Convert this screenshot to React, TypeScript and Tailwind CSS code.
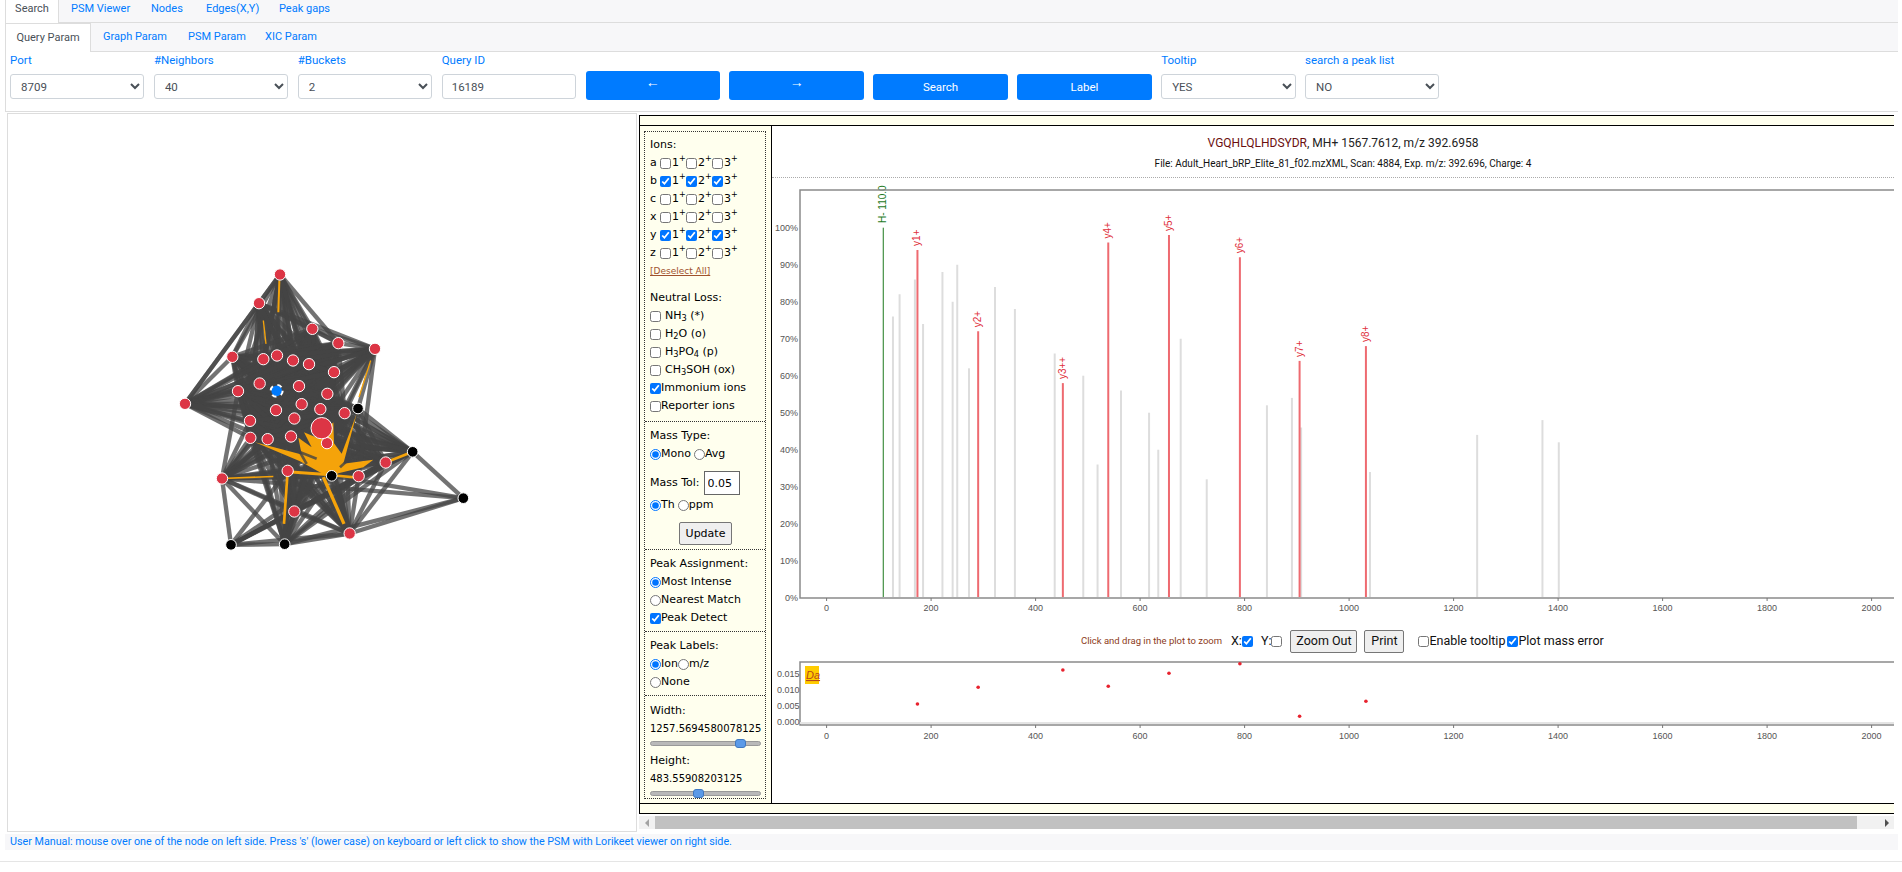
import { ReactNode } from "react";

type Pt = [number, number];

// graph nodes, in 3x coordinates of the graph area
const upper: Pt[] = [
	[360, 72], [297, 158], [457, 235], [535, 278], [645, 295], [217, 319], [310, 326], [351, 315],
	[399, 330], [447, 341], [522, 365], [299, 399], [234, 422], [417, 407], [502, 430], [348, 479],
	[425, 461], [481, 476], [554, 488], [270, 511], [403, 504], [271, 562], [323, 566], [393, 558],
	[501, 578], [75, 460], [485, 533],
];
const lowerRed: Pt[] = [[186, 684], [383, 661], [403, 783], [569, 849], [596, 677], [677, 636]];
const lowerBlack: Pt[] = [[594, 474], [758, 604], [515, 676], [910, 743], [213, 883], [374, 881]];

function buildEdges() {
	const edges: [Pt, Pt][] = [];
	const same = (a: Pt, x: number, y: number) => a[0] === x && a[1] === y;
	upper.forEach((a, i) =>
		upper.slice(i + 1).forEach((b) => {
			if (same(a, 360, 72) && same(b, 645, 295)) return;
			edges.push([a, b]);
		}),
	);
	const lower = [...lowerRed, ...lowerBlack];
	const far: Pt = [910, 743];
	const top: Pt = [594, 474];
	lower.forEach((a, i) =>
		lower.slice(i + 1).forEach((b) => {
			if (same(a, far[0], far[1]) || same(b, far[0], far[1])) {
				const o = same(a, far[0], far[1]) ? b : a;
				if (![758, 569, 186, 515, 374].includes(o[0])) return;
			}
			if (same(a, top[0], top[1]) || same(b, top[0], top[1])) {
				const o = same(a, top[0], top[1]) ? b : a;
				if (![758, 677, 515, 596].includes(o[0])) return;
			}
			edges.push([a, b]);
		}),
	);
	upper
		.filter((a) => a[1] >= 400 && a[0] !== 75)
		.forEach((a) =>
			lower.forEach((b) => {
				if (b[0] === 213 || b[0] === 910) return;
				edges.push([a, b]);
			}),
		);
	edges.push([[645, 295], [594, 474]]);
	edges.push([[645, 295], [596, 677]]);
	return edges;
}

function Graph() {
	return (
		<svg viewBox="-456 -408 1884 2148" className="w-full h-full block">
			<g stroke="#444444" strokeOpacity="0.75" strokeWidth="13">
				{buildEdges().map(([a, b], i) => (
					<line key={i} x1={a[0]} y1={a[1]} x2={b[0]} y2={b[1]} />
				))}
			</g>
			{/* orange highlighted edges */}
			<path
				d="M285,575 L425,612 L415,562 L455,590 L432,545 L478,565 L520,515 L522,578 L545,610 L590,490 L550,640 L640,628 L610,650 L535,668 L515,685 L470,660 L420,632 Z"
				fill="#f5a30a"
			/>
			<g stroke="#f5a30a" fill="none">
				<line x1="490" y1="680" x2="552" y2="820" strokeWidth="10" />
				<line x1="383" y1="661" x2="372" y2="820" strokeWidth="8" />
				<line x1="186" y1="684" x2="340" y2="678" strokeWidth="5" />
				<line x1="383" y1="664" x2="500" y2="672" strokeWidth="9" />
				<line x1="677" y1="636" x2="758" y2="604" strokeWidth="8" />
				<line x1="525" y1="675" x2="600" y2="682" strokeWidth="8" />
				<line x1="358" y1="90" x2="355" y2="185" strokeWidth="6" />
				<line x1="310" y1="210" x2="318" y2="280" strokeWidth="4" />
				<line x1="632" y1="330" x2="597" y2="440" strokeWidth="4" />
			</g>
			{/* a few dark edges run over the orange */}
			<g stroke="#444444" strokeOpacity="0.8" strokeWidth="8">
				<line x1="323" y1="566" x2="470" y2="625" />
				<line x1="393" y1="558" x2="440" y2="640" />
				<line x1="596" y1="600" x2="540" y2="650" />
			</g>
			{[...upper, ...lowerRed].map((n, i) => (
				<circle
					key={i}
					cx={n[0]}
					cy={n[1]}
					r={n[0] === 485 ? 32 : 17}
					fill="#dc3545"
					stroke="#ffffff"
					strokeWidth="3"
				/>
			))}
			{lowerBlack.map((n, i) => (
				<circle key={i} cx={n[0]} cy={n[1]} r="16" fill="#000000" stroke="#ffffff" strokeWidth="3" />
			))}
			<circle cx="350" cy="421" r="16" fill="#007bff" />
			<circle cx="350" cy="421" r="18" fill="none" stroke="#ffffff" strokeWidth="6" strokeDasharray="14 14.3" />
		</svg>
	);
}

const px = (z: number) => 770 + z / 1.96;
const py = (p: number) => 597.7 - 3.7 * p;

const grey: Pt[] = [
	[241, 76], [254, 82], [284, 86], [300, 74], [338, 88], [358, 80], [367, 90], [390, 62], [441, 84],
	[480, 78], [558, 66], [614, 60], [642, 36], [688, 56], [743, 50], [761, 40], [805, 70], [856, 32],
	[974, 52], [1023, 54], [1041, 46], [1176, 34], [1386, 44], [1514, 48], [1546, 42],
];
const red: [number, number, string][] = [
	[289, 94, "y1+"], [408, 72, "y2+"], [574, 58, "y3++"], [663, 96, "y4+"],
	[782, 98, "y5+"], [921, 92, "y6+"], [1038, 64, "y7+"], [1168, 68, "y8+"],
];
const errPts: Pt[] = [
	[289, 704], [408, 687.3], [574, 670], [663, 686.3], [782, 673.3], [921, 663.7], [1038, 716.3], [1168, 701.3],
];
const ticks = [0, 200, 400, 600, 800, 1000, 1200, 1400, 1600, 1800, 2000];
const tx = (m: number) => 826.6 + 0.5225 * m;

function Spectrum() {
	return (
		<svg viewBox="772 178 1122 447" className="block w-[1122px] h-[447px] shrink-0 font-['Liberation_Sans',sans-serif]">
			{grey.map(([z, p], i) => (
				<line key={i} x1={px(z)} x2={px(z)} y1={py(p)} y2={597} stroke="#dddddd" strokeWidth="2" />
			))}
			{red.map(([z, p, label]) => (
				<g key={label}>
					<line x1={px(z)} x2={px(z)} y1={py(p)} y2={597} stroke="#ee6a70" strokeWidth="2" />
					<text
						x={px(z) + 3}
						y={py(p) - 4}
						fontSize="10"
						fill="#e0303c"
						transform={`rotate(-90 ${px(z) + 3} ${py(p) - 4})`}
					>
						{label}
					</text>
				</g>
			))}
			<line x1={px(222)} x2={px(222)} y1={py(100)} y2={597} stroke="#1d7a1d" strokeWidth="1" />
			<text
				x={px(222) + 3}
				y={223}
				fontSize="10"
				fill="#1d7a1d"
				transform={`rotate(-90 ${px(222) + 3} 223)`}
			>
				H- 110.0
			</text>
			<polyline points="1894,190 800,190 800,598 1894,598" fill="none" stroke="#8a8a8a" strokeWidth="1.5" />
			{[0, 10, 20, 30, 40, 50, 60, 70, 80, 90, 100].map((p) => (
				<text key={p} x="798" y={py(p) + 3} fontSize="9" fill="#555555" textAnchor="end">
					{p}%
				</text>
			))}
			{ticks.map((m) => (
				<g key={m}>
					<line x1={tx(m)} x2={tx(m)} y1="598" y2="601" stroke="#777777" />
					<text x={tx(m)} y="611" fontSize="9" fill="#555555" textAnchor="middle">
						{m}
					</text>
				</g>
			))}
		</svg>
	);
}

function ErrorPlot() {
	return (
		<svg viewBox="772 658 1122 87" className="block w-[1122px] h-[87px] shrink-0 font-['Liberation_Sans',sans-serif]">
			<polyline points="1894,662 800,662 800,725 1894,725" fill="none" stroke="#8a8a8a" strokeWidth="1.5" />
			<line x1="800" x2="1894" y1="723" y2="723" stroke="#e4e4e4" strokeWidth="2" />
			{[["0.015", 674], ["0.010", 690], ["0.005", 706], ["0.000", 722]].map(([t, y]) => (
				<text key={t} x="777" y={Number(y) + 3} fontSize="9" fill="#555555">
					{t}
				</text>
			))}
			<rect x="805" y="666" width="14" height="18" fill="#ffcc00" />
			<text x="806" y="679" fontSize="11" fontStyle="italic" fill="#b5471a" textDecoration="underline">
				Da
			</text>
			{errPts.map(([z, y], i) => (
				<circle key={i} cx={px(z)} cy={y} r="1.8" fill="#e8222e" />
			))}
			{ticks.map((m) => (
				<g key={m}>
					<line x1={tx(m)} x2={tx(m)} y1="725" y2="728" stroke="#777777" />
					<text x={tx(m)} y="739" fontSize="9" fill="#555555" textAnchor="middle">
						{m}
					</text>
				</g>
			))}
		</svg>
	);
}

function Field({ label, children }: { label: string; children: ReactNode }) {
	return (
		<div className="w-[134.4px] flex flex-col">
			<label className="h-[16px] leading-[16px] text-[#007bff] mb-[6px]">{label}</label>
			{children}
		</div>
	);
}

function Pick({ value }: { value: string }) {
	return (
		<select
			defaultValue={value}
			className="h-[25px] w-full px-[6px] bg-white border border-[#ced4da] rounded-[3px] text-[#495057]"
		>
			<option>{value}</option>
		</select>
	);
}

function IonRow({ name, on }: { name: string; on?: boolean }) {
	return (
		<div className="h-[18px] flex items-center">
			<span className="w-[10px]">{name}</span>
			{[1, 2, 3].map((n) => (
				<span key={n} className="flex items-center w-[26px]">
					<input type="checkbox" defaultChecked={on} className="w-[11px] h-[11px] m-0 mr-[1px]" />
					{n}
					<sup className="text-[8px]">+</sup>
				</span>
			))}
		</div>
	);
}

function Check({ on, children }: { on?: boolean; children: ReactNode }) {
	return (
		<div className="h-[18px] flex items-center">
			<input type="checkbox" defaultChecked={on} className="w-[11px] h-[11px] m-0" />
			{children}
		</div>
	);
}

function Radio({ on, name, label }: { on?: boolean; name: string; label: string }) {
	return (
		<span className="flex items-center">
			<input type="radio" name={name} defaultChecked={on} className="w-[11px] h-[11px] m-0" />
			{label}
		</span>
	);
}

function Slider({ at }: { at: string }) {
	return (
		<div className="relative h-[5px] w-[111px] rounded-full bg-[#b9b9b9] border border-[#999999] my-[3px]">
			<div className={`absolute -top-[3px] w-[11px] h-[9px] rounded-[3px] bg-[#5b9ae8] border border-[#3f78c0] ${at}`} />
		</div>
	);
}

function Sidebar() {
	return (
		<div className="w-[132px] shrink-0 bg-[#ffffee] border-r border-black pl-[4px] pt-[5px] font-['DejaVu_Sans',sans-serif] text-[11px] leading-[18px] text-black">
			<div className="w-[122px] border border-dotted border-[#333333]">
				<div className="h-[289px] pl-[5px] pt-[4px]">
					<div className="h-[18px]">Ions:</div>
					<IonRow name="a" />
					<IonRow name="b" on />
					<IonRow name="c" />
					<IonRow name="x" />
					<IonRow name="y" on />
					<IonRow name="z" />
					<div className="h-[18px] text-[9px] text-[#a0522d] underline">[Deselect All]</div>
					<div className="h-[18px] mt-[9px]">Neutral Loss:</div>
					<Check>
						<span className="ml-[4px]">
							NH<sub>3</sub> (*)
						</span>
					</Check>
					<Check>
						<span className="ml-[4px]">
							H<sub>2</sub>O (o)
						</span>
					</Check>
					<Check>
						<span className="ml-[4px]">
							H<sub>3</sub>PO<sub>4</sub> (p)
						</span>
					</Check>
					<Check>
						<span className="ml-[4px]">
							CH<sub>3</sub>SOH (ox)
						</span>
					</Check>
					<Check on>Immonium ions</Check>
					<Check>Reporter ions</Check>
				</div>
				<div className="h-[128px] pl-[5px] pt-[5px] border-t border-dotted border-[#333333]">
					<div className="h-[18px]">Mass Type:</div>
					<div className="h-[18px] flex items-center gap-[3px]">
						<Radio on name="mass" label="Mono" />
						<Radio name="mass" label="Avg" />
					</div>
					<div className="flex items-center gap-[4px] mt-[8px] h-[24px]">
						Mass Tol:
						<input
							defaultValue="0.05"
							className="w-[36px] h-[24px] px-[3px] bg-white border border-[#666666] outline-none"
						/>
					</div>
					<div className="h-[18px] flex items-center gap-[3px] mt-[1px]">
						<Radio on name="tol" label="Th" />
						<Radio name="tol" label="ppm" />
					</div>
					<button className="block ml-[29px] mt-[8px] w-[53px] h-[23px] bg-[#efefef] border border-[#767676] rounded-[2px]">
						Update
					</button>
				</div>
				<div className="h-[82px] pl-[5px] pt-[5px] border-t border-dotted border-[#333333]">
					<div className="h-[18px]">Peak Assignment:</div>
					<div className="h-[18px] flex items-center">
						<Radio on name="assign" label="Most Intense" />
					</div>
					<div className="h-[18px] flex items-center">
						<Radio name="assign" label="Nearest Match" />
					</div>
					<Check on>Peak Detect</Check>
				</div>
				<div className="h-[64px] pl-[5px] pt-[5px] border-t border-dotted border-[#333333]">
					<div className="h-[18px]">Peak Labels:</div>
					<div className="h-[18px] flex items-center">
						<Radio on name="labels" label="Ion" />
						<Radio name="labels" label="m/z" />
					</div>
					<div className="h-[18px] flex items-center">
						<Radio name="labels" label="None" />
					</div>
				</div>
				<div className="h-[103px] pl-[5px] pt-[6px] border-t border-dotted border-[#333333]">
					<div className="h-[18px]">Width:</div>
					<div className="h-[18px] text-[10px]">1257.5694580078125</div>
					<Slider at="left-[84px]" />
					<div className="h-[18px] mt-[6px]">Height:</div>
					<div className="h-[18px] text-[10px]">483.55908203125</div>
					<Slider at="left-[42px]" />
				</div>
			</div>
		</div>
	);
}

function ChartPanel() {
	return (
		<div className="flex-1 bg-white overflow-hidden flex flex-col">
			<div className="h-[52px] shrink-0 border-b border-dotted border-[#aaaaaa] flex flex-col items-center pl-[20px]">
				<div className="mt-[8px] h-[18px] leading-[18px] text-[12px] text-[#222222]">
					<span className="text-[#6b0f0f]">VGQHLQLHDSYDR</span>, MH+ 1567.7612, m/z 392.6958
				</div>
				<div className="mt-[4px] h-[16px] leading-[16px] text-[10px] text-[#111111]">
					File: Adult_Heart_bRP_Elite_81_f02.mzXML, Scan: 4884, Exp. m/z: 392.696, Charge: 4
				</div>
			</div>
			<Spectrum />
			<div className="h-[33px] shrink-0 flex items-center pl-[309px] text-[12.5px] text-[#111111]">
				<span className="text-[9.5px] text-[#8b3a1a] w-[150px] whitespace-nowrap">Click and drag in the plot to zoom</span>
				<span>X:</span>
				<input type="checkbox" defaultChecked className="w-[11px] h-[11px] m-0 mr-[8px]" />
				<span>Y:</span>
				<input type="checkbox" className="w-[11px] h-[11px] m-0 mr-[8px]" />
				<button className="w-[67px] h-[23px] bg-[#efefef] border border-[#767676] rounded-[2px] mr-[7px]">
					Zoom Out
				</button>
				<button className="w-[40px] h-[23px] bg-[#efefef] border border-[#767676] rounded-[2px] mr-[14px]">
					Print
				</button>
				<input type="checkbox" className="w-[11px] h-[11px] m-0" />
				<span className="mr-[2px]">Enable tooltip</span>
				<input type="checkbox" defaultChecked className="w-[11px] h-[11px] m-0" />
				<span>Plot mass error</span>
			</div>
			<ErrorPlot />
		</div>
	);
}

export default function App() {
	return (
		<div className="w-[1902px] h-[872px] overflow-hidden bg-white flex flex-col font-['Roboto',sans-serif] text-[11.5px]">
			{/* Top tabs */}
			<div className="h-[23px] shrink-0 ml-[5px] mr-[4px] bg-[#f7f7f9] border-b border-[#dddddd] flex items-end text-[11px]">
				<div className="w-[54px] h-[23px] -mb-[1px] bg-white border-x border-[#dddddd] text-center leading-[17px] text-[#495057]">
					Search
				</div>
				<div className="flex h-[22px] leading-[17px] text-[#007bff] whitespace-nowrap">
					<span className="ml-[12px] w-[56px]">PSM Viewer</span>
					<span className="ml-[24px] w-[31px]">Nodes</span>
					<span className="ml-[24px] w-[49px]">Edges(X,Y)</span>
					<span className="ml-[24px] w-[48px]">Peak gaps</span>
				</div>
			</div>
			<div className="h-[29px] shrink-0 ml-[5px] mr-[4px] bg-[#f7f7f9] border-b border-[#dddddd] flex items-end text-[11px]">
				<div className="w-[86px] h-[29px] -mb-[1px] bg-white border-x border-t border-[#dddddd] text-center leading-[28px] text-[#495057]">
					Query Param
				</div>
				<div className="flex h-[28px] leading-[28px] text-[#007bff] whitespace-nowrap">
					<span className="ml-[12px] w-[61px]">Graph Param</span>
					<span className="ml-[24px] w-[53px]">PSM Param</span>
					<span className="ml-[24px] w-[49px]">XIC Param</span>
				</div>
			</div>
			{/* Query params */}
			<div className="h-[60px] shrink-0 ml-[5px] mr-[4px] border-l border-b border-[#dddddd] flex items-start gap-[9.5px] pl-[4px]">
				<div className="flex gap-[9.5px]">
					<Field label="Port">
						<Pick value="8709" />
					</Field>
					<Field label="#Neighbors">
						<Pick value="40" />
					</Field>
					<Field label="#Buckets">
						<Pick value="2" />
					</Field>
					<Field label="Query ID">
						<input
							defaultValue="16189"
							className="h-[25px] w-full px-[9px] bg-white border border-[#ced4da] rounded-[3px] text-[#495057] outline-none"
						/>
					</Field>
				</div>
				<button className="mt-[19px] w-[134.4px] h-[29px] pb-[6px] bg-[#007bff] rounded-[3px] text-white text-[14px]">←</button>
				<button className="mt-[19px] w-[134.4px] h-[29px] pb-[6px] bg-[#007bff] rounded-[3px] text-white text-[14px]">→</button>
				<button className="mt-[22px] w-[134.4px] h-[26px] pt-[1px] bg-[#007bff] rounded-[3px] text-white">Search</button>
				<button className="mt-[22px] w-[134.4px] h-[26px] pt-[1px] bg-[#007bff] rounded-[3px] text-white">Label</button>
				<div className="flex gap-[9.5px]">
					<Field label="Tooltip">
						<Pick value="YES" />
					</Field>
					<Field label="search a peak list">
						<Pick value="NO" />
					</Field>
				</div>
			</div>
			{/* Main row */}
			<div className="flex mt-[1px] ml-[7px]">
				<div className="w-[630px] h-[719px] shrink-0 border border-[#dddddd]">
					<Graph />
				</div>
				<div className="ml-[2px] w-[1255px] pt-[2px] flex flex-col">
					<div className="border-y border-l border-black bg-[#ffffee]">
						<div className="h-[9px]" />
						<div className="h-[679px] border-y border-black flex">
							<Sidebar />
							<ChartPanel />
						</div>
						<div className="h-[9px]" />
					</div>
					<div className="mt-[2px] h-[13px] bg-[#f1f1f1] flex items-center">
						<div className="w-[16px] flex justify-center">
							<div className="w-0 h-0 border-y-[4px] border-y-transparent border-r-[4px] border-r-[#a3a3a3]" />
						</div>
						<div className="w-[1202px] h-[13px] bg-[#c1c1c1]" />
						<div className="flex-1 flex justify-end pr-[5px]">
							<div className="w-0 h-0 border-y-[4px] border-y-transparent border-l-[4px] border-l-[#505050]" />
						</div>
					</div>
				</div>
			</div>
			{/* Manual */}
			<div className="mt-[2px] ml-[5px] mr-[4px] h-[16px] shrink-0 bg-[#f7f7f9] pl-[5px] leading-[16px] text-[10.75px] text-[#007bff]">
				User Manual: mouse over one of the node on left side. Press 's' (lower case) on keyboard or left click to show the PSM with Lorikeet viewer on right side.
			</div>
			<div className="mt-[11px] h-[1px] bg-[#e5e5e5]" />
		</div>
	);
}
